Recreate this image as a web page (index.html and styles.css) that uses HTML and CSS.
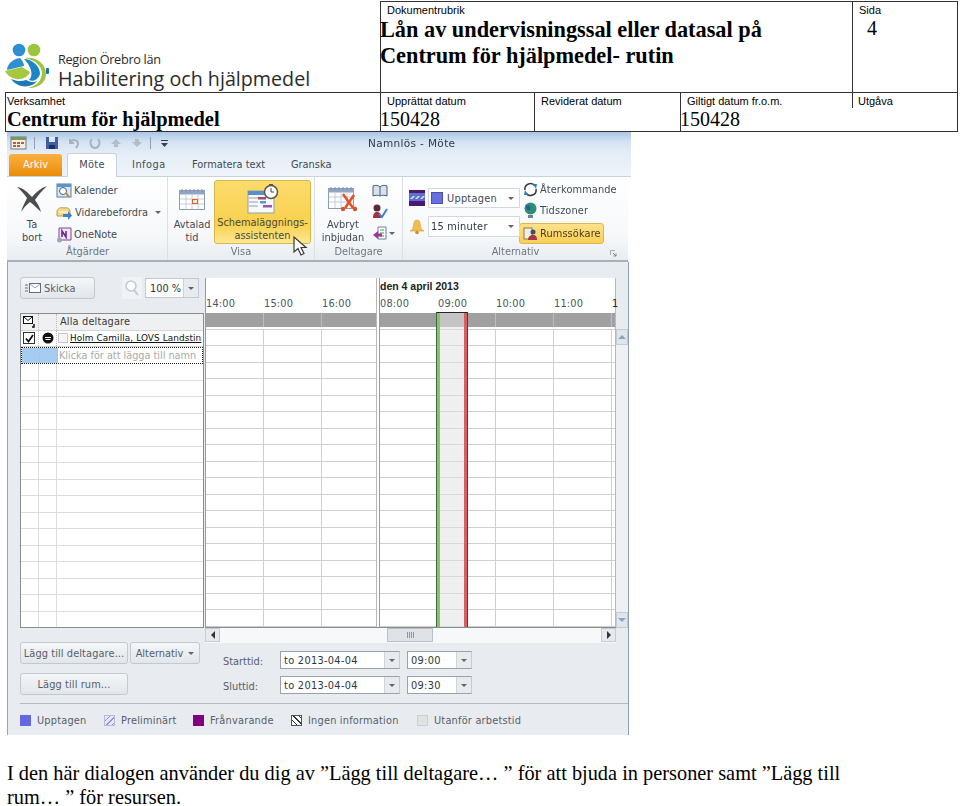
FILE: index.html
```html
<!DOCTYPE html>
<html lang="sv">
<head>
<meta charset="utf-8">
<title>Lån av undervisningssal eller datasal på Centrum för hjälpmedel</title>
<link rel="stylesheet" href="styles.css">
</head>
<body>
<div class="page">
  <header class="head">
    <div class="logo">
      <svg class="logo-mark" viewBox="0 0 45 48" width="45" height="48">
        <circle cx="15" cy="8" r="6.3" fill="#2e8fd0"/>
        <circle cx="30" cy="8" r="6.3" fill="#9cc43c"/>
        <path d="M21 16 C32 14 42 22 42 32 C42 41 33 47 24 46 C33 44 38 38 38 31 C38 24 31 18 21 16Z" fill="#9cc43c"/>
        <path d="M20 17 C28 17 36 24 36 32 C34 38 29 40 25 38 C30 33 27 24 20 17Z" fill="#1f86c6"/>
        <path d="M16 16 C8 17 3 23 3 28 L20 24 C20 22 19 19 16 16Z" fill="#2e8fd0"/>
        <path d="M1 29 L18 25 L26 30 C24 35 18 38 12 37 C7 36 3 33 1 29Z" fill="#a6c83f"/>
        <path d="M7 37 C12 39 17 40 22 38 C26 40 30 41 33 39 C28 46 14 47 7 37Z" fill="#1b79b8"/>
        <rect x="42" y="26" width="3" height="6" rx="1" fill="#1f6fae"/>
      </svg>
      <div class="logo-text">
        <div class="logo-org">Region Örebro län</div>
        <div class="logo-name">Habilitering och hjälpmedel</div>
      </div>
    </div>
    <div class="cell title-cell">
      <div class="label label-in">Dokumentrubrik</div>
      <div class="title">Lån av undervisningssal eller datasal på<br>Centrum för hjälpmedel- rutin</div>
    </div>
    <div class="cell page-cell">
      <div class="label label-side">Sida</div>
      <div class="page-no">4</div>
    </div>
    <div class="meta">
      <div class="mcell m-unit">
        <div class="label">Verksamhet</div>
        <div class="unit">Centrum för hjälpmedel</div>
      </div>
      <div class="mcell m-date1">
        <div class="label label-in">Upprättat datum</div>
        <div class="value">150428</div>
      </div>
      <div class="mcell m-date2">
        <div class="label label-in">Reviderat datum</div>
      </div>
      <div class="mcell m-date3">
        <div class="label label-in">Giltigt datum fr.o.m.</div>
        <div class="value">150428</div>
      </div>
      <div class="mcell m-ver">
        <div class="label label-side">Utgåva</div>
      </div>
    </div>
  </header>

  <section class="shot">
    <div class="titlebar">
      <div class="qat">
        <svg width="17" height="15" viewBox="0 0 17 15"><rect x="1" y="2" width="15" height="12" fill="#f3efe2" stroke="#6a7a8c"/><path d="M1 2h15v3H1z" fill="#7a9a5a"/><path d="M3 7h3v2H3zM7 7h3v2H7zM11 7h3v2h-3zM3 10h3v2H3zM7 10h3v2H7z" fill="#c05a3a"/></svg>
        <span class="qat-sep"></span>
        <svg width="14" height="14" viewBox="0 0 14 14"><path d="M1 1h12v12H1z" fill="#3d5fa8"/><path d="M4 1h6v5H4z" fill="#dfe8f5"/><path d="M4 9h6v4H4z" fill="#1e2f66"/></svg>
        <svg width="12" height="12" viewBox="0 0 12 12"><path d="M2 2 v4 h4 M2 6 C4 2 10 2 10 7 C10 9 9 10 8 11" fill="none" stroke="#a9b3bd" stroke-width="2"/></svg>
        <svg width="12" height="12" viewBox="0 0 12 12"><path d="M3 2 C0 5 2 11 6 11 C10 11 12 5 9 2" fill="none" stroke="#a9b3bd" stroke-width="2"/></svg>
        <svg width="12" height="10" viewBox="0 0 12 10"><path d="M6 1 L11 6 H8 V9 H4 V6 H1Z" fill="#b4bcc4"/></svg>
        <svg width="12" height="10" viewBox="0 0 12 10"><path d="M6 9 L11 4 H8 V1 H4 V4 H1Z" fill="#b4bcc4"/></svg>
        <span class="qat-sep"></span>
        <svg width="7" height="8" viewBox="0 0 7 8"><path d="M0 1h7v1H0zM0 4h7L3.500 8Z" fill="#30405a"/></svg>
      </div>
      <div class="win-title">Namnlös - Möte</div>
    </div>
    <nav class="tabs">
      <span class="tab-file">Arkiv</span>
      <span class="tab tab-active">Möte</span>
      <span class="tab tab-infoga">Infoga</span>
      <span class="tab tab-format">Formatera text</span>
      <span class="tab tab-gr">Granska</span>
    </nav>
    <div class="ribbon">
      <div class="group g-actions">
        <div class="group-body">
          <div class="big big-del">
            <svg width="32" height="28" viewBox="0 0 32 28"><path d="M1 2 C8 3 12 8 16 12 C20 7 25 3 31 1 C26 6 22 10 19 15 C22 19 24 23 25 27 C21 23 18 20 14 17 C10 20 7 24 5 27 C6 22 9 18 11 13 C8 9 5 5 1 2Z" fill="#4d4d4d"/></svg>
            <span>Ta<br>bort</span>
          </div>
          <div class="small-col">
            <div class="small"><svg width="16" height="16" viewBox="0 0 16 16"><rect x="1" y="1" width="14" height="13" fill="#dbe9f6" stroke="#4a7fb0"/><rect x="1" y="1" width="14" height="3" fill="#5d93c6"/><circle cx="7" cy="8" r="3.500" fill="#fff" stroke="#49617a"/><path d="M10 10l3 4" stroke="#c28a2a" stroke-width="2"/></svg><span>Kalender</span></div>
            <div class="small"><svg width="17" height="16" viewBox="0 0 17 16"><path d="M1 7 C1 3 5 2 8 3 C12 2 14 4 14 7 V11 H1Z" fill="#f2d88a" stroke="#c29a44"/><path d="M3 7h9" stroke="#fff"/><path d="M7 9 H12 V6 L16 10.500 L12 15 V12 H7Z" fill="#3f80c8"/></svg><span>Vidarebefordra</span><i class="caret caret-vb"></i></div>
            <div class="small"><svg width="16" height="16" viewBox="0 0 16 16"><path d="M3 1h12v12H3z" fill="#efe6f5" stroke="#8043a0"/><path d="M6 10V4l4 6V4" fill="none" stroke="#6a2a90" stroke-width="1.600"/><circle cx="3.500" cy="13" r="2.500" fill="#9aa7b5"/></svg><span>OneNote</span></div>
          </div>
        </div>
        <div class="group-label">Åtgärder</div>
      </div>
      <div class="group g-view">
        <div class="group-body">
          <div class="big big-cal">
            <svg width="26" height="22" viewBox="0 0 26 22"><rect x=".500" y="2.500" width="25" height="19" fill="#fff" stroke="#8f9eae"/><rect x=".500" y="2.500" width="25" height="4" fill="#8fa7c4"/><path d="M7 7v14M13 7v14M19 7v14M1 11h24M1 16h24" stroke="#c4ccd4"/><rect x="13.500" y="11.500" width="5" height="4" fill="#fbe6da" stroke="#d8632e"/><path d="M3 1v3M7 1v3M11 1v3M15 1v3M19 1v3M23 1v3" stroke="#7d8fa5"/></svg>
            <span>Avtalad<br>tid</span>
          </div>
          <div class="sched-btn">
            <svg width="32" height="30" viewBox="0 0 32 30"><rect x="1" y="7" width="26" height="22" fill="#f7f9fb" stroke="#8d9fb3"/><rect x="1" y="7" width="26" height="4" fill="#5c8fc8"/><path d="M2 14h9M2 18h9M2 22h9" stroke="#8ba0b5"/><rect x="11" y="13" width="8" height="2.500" fill="#a34a6e"/><rect x="13" y="17" width="6" height="2.500" fill="#5d93c6"/><rect x="16" y="21" width="9" height="2.500" fill="#8a5ca8"/><circle cx="24" cy="8" r="6.500" fill="#fff" stroke="#5a5a4a" stroke-width="1.500"/><path d="M24 4v4h3" stroke="#444" fill="none"/><path d="M22 0h4v1.500h-4z" fill="#555"/></svg>
            <span>Schemaläggnings-<br>assistenten</span>
          </div>
        </div>
        <div class="group-label">Visa</div>
      </div>
      <div class="group g-part">
        <div class="group-body">
          <div class="big big-cancel">
            <svg width="30" height="26" viewBox="0 0 30 26"><rect x=".500" y="2.500" width="25" height="20" fill="#fff" stroke="#8f9eae"/><rect x=".500" y="2.500" width="25" height="4" fill="#8fa7c4"/><path d="M7 7v15M13 7v15M19 7v15M1 11h24M1 16h24" stroke="#c4ccd4"/><path d="M3 1v3M7 1v3M11 1v3M15 1v3M19 1v3M23 1v3" stroke="#7d8fa5"/><path d="M15 8 L25 22 M26 9 L17 22" stroke="#e2502a" stroke-width="2.500"/><circle cx="15" cy="23" r="2.200" fill="#e2502a"/><circle cx="27" cy="23" r="2.200" fill="#e2502a"/></svg>
            <span>Avbryt<br>inbjudan</span>
          </div>
          <div class="icon-col">
            <svg width="16" height="13" viewBox="0 0 16 13"><path d="M1 2 C4 1 6 1 8 3 C10 1 12 1 15 2 V12 C12 11 10 11 8 12 C6 11 4 11 1 12Z" fill="#d9e2ec" stroke="#44607e"/><path d="M8 3v9" stroke="#44607e"/></svg>
            <svg width="16" height="15" viewBox="0 0 16 15"><circle cx="5" cy="4" r="3.500" fill="#5a2a3a"/><path d="M1 14 C1 9 3 8 5 8 C8 8 9 10 9 14Z" fill="#a5303a"/><path d="M7 10 L10 13 L15 5" fill="none" stroke="#3f7fd0" stroke-width="2"/></svg>
            <div class="icon-menu">
              <svg width="16" height="15" viewBox="0 0 16 15"><path d="M6 1h8v12H6z" fill="#fff" stroke="#6d7f92"/><path d="M8 4h4M8 7h4M8 10h4" stroke="#4d8f5a"/><path d="M1 9 L6 5 V7.500 H10 V10.500 H6 V13Z" fill="#a0369a"/></svg>
              <i class="caret"></i>
            </div>
          </div>
        </div>
        <div class="group-label">Deltagare</div>
      </div>
      <div class="group g-opts">
        <div class="group-body">
          <div class="opt-col">
            <div class="opt-row">
              <svg width="16" height="16" viewBox="0 0 16 16"><rect width="16" height="16" fill="#4a1a72"/><rect y="3" width="16" height="8" fill="#5f6fd0"/><path d="M1 9l3-3h2L3 9zM6 9l3-3h2L8 9zM11 9l3-3h2l-3 3z" fill="#e6e6f5"/></svg>
              <div class="combo"><i class="swatch"></i><span>Upptagen</span><i class="caret caret-r"></i></div>
            </div>
            <div class="opt-row">
              <svg width="16" height="16" viewBox="0 0 16 16"><path d="M8 1 C5 1 5 4 4.500 7 C4 10 3 11 1 12 H15 C13 11 12 10 11.500 7 C11 4 11 1 8 1Z" fill="#f2bd4a" stroke="#cf9a33" stroke-width=".6"/><circle cx="8" cy="13.500" r="1.800" fill="#d98a2a"/></svg>
              <div class="combo combo-min"><span>15 minuter</span><i class="caret caret-r"></i></div>
            </div>
          </div>
          <div class="opt-links">
            <div class="small"><svg width="15" height="15" viewBox="0 0 15 15"><path d="M2 8 A5.500 5.500 0 0 1 12 4" fill="none" stroke="#3a3a3a" stroke-width="1.500"/><path d="M13 7 A5.500 5.500 0 0 1 3 11" fill="none" stroke="#3a3a3a" stroke-width="1.500"/><path d="M10 2l4 0-1 5zM5 13l-4 0 1-5z" fill="#2f7fc0"/></svg><span>Återkommande</span></div>
            <div class="small"><svg width="15" height="17" viewBox="0 0 15 17"><circle cx="7.500" cy="6.500" r="6" fill="#2f8f74"/><path d="M3 4 C6 2 8 5 7 8 C5 9 3 7 3 4Z" fill="#1d5f9e"/><path d="M5 13h5v3H5z" fill="#6f8195"/></svg><span>Tidszoner</span></div>
            <div class="small small-on"><svg width="15" height="14" viewBox="0 0 15 14"><rect x="1" y="1" width="8" height="11" fill="#f4efdf" stroke="#8a7a55"/><circle cx="10" cy="5" r="2.500" fill="#3f4f68"/><path d="M5 13 C5 9 8 8 10 8 C13 8 14 10 14 13Z" fill="#a8344a"/></svg><span>Rumssökare</span></div>
          </div>
        </div>
        <div class="group-label">Alternativ<svg class="launcher" width="7" height="7" viewBox="0 0 7 7"><path d="M.500.500H5M.500.500V5" stroke="#a0a8b0" fill="none"/><path d="M3 3l3 3M6 3.500V6H3.500" stroke="#7a8490" fill="none"/></svg></div>
      </div>
      <svg class="cursor" width="15" height="20" viewBox="0 0 15 20"><path d="M1 1 V16 L5 12.500 L8 19 L11 17.500 L8 11.500 H13Z" fill="#fff" stroke="#3a3a3a" stroke-width="1.200"/></svg>
    </div>

    <div class="body">
      <div class="sched">
        <div class="left">
          <div class="tools">
            <div class="btn btn-send"><svg width="16" height="10" viewBox="0 0 16 10"><path d="M0 2h3M0 5h3M0 8h3" stroke="#57708a"/><rect x="4.500" y=".500" width="11" height="9" fill="#fff" stroke="#57708a"/><path d="M5 1l5 4 5-4" fill="none" stroke="#8fa3b7"/></svg><span>Skicka</span></div>
            <div class="zoom-ic"><svg width="14" height="16" viewBox="0 0 14 16"><circle cx="6" cy="6" r="5" fill="#fbfcfd" stroke="#c2c8ce" stroke-width="1.500"/><path d="M9 10l4 5" stroke="#c2c8ce" stroke-width="2"/></svg></div>
            <div class="zoom-box"><span>100 %</span><i class="drop"><i class="caret"></i></i></div>
          </div>
          <div class="list">
            <div class="list-head">
              <div class="c c1"><svg width="12" height="12" viewBox="0 0 12 12"><rect x=".500" y=".500" width="9" height="7" fill="#fff" stroke="#111"/><path d="M1 1l4 3.500L9 1" fill="none" stroke="#111"/><path d="M11 8v3H9" fill="none" stroke="#111" stroke-width="1.500"/></svg></div>
              <div class="c c2"></div>
              <div class="c c3">Alla deltagare</div>
            </div>
            <div class="row">
              <div class="c c1"><span class="check"><svg width="9" height="9" viewBox="0 0 9 9"><path d="M1 4.500l2.500 3L8 1" fill="none" stroke="#111" stroke-width="1.800"/></svg></span></div>
              <div class="c c2"><svg width="12" height="12" viewBox="0 0 12 12"><circle cx="6" cy="6" r="5.500" fill="#111"/><path d="M3 5.500h6M3.500 7.500h5" stroke="#fff" stroke-width="1.100"/></svg></div>
              <div class="c c3 person"><i class="mini-box"></i><span>Holm Camilla, LOVS Landstin</span></div>
            </div>
            <div class="row row-new">
              <div class="c c1 blue"></div>
              <div class="c c2 blue"></div>
              <div class="c c3 hint">Klicka för att lägga till namn</div>
            </div>
            <div class="rest"></div>
          </div>
        </div>
        <div class="right">
          <div class="timeline">
            <div class="day day-a">
              <div class="day-date"></div>
              <div class="hours"><span>14:00</span><span>15:00</span><span>16:00</span></div>
              <div class="busy"></div>
              <div class="cells"></div>
            </div>
            <div class="day day-b">
              <div class="day-date">den 4 april 2013</div>
              <div class="hours"><span>08:00</span><span>09:00</span><span>10:00</span><span>11:00</span><span class="cut">1</span></div>
              <div class="busy"></div>
              <div class="cells"></div>
              <div class="meeting"></div>
            </div>
          </div>
          <div class="hscroll">
            <div class="sb-btn"><i class="tri tri-l"></i></div>
            <div class="thumb"><i></i><i></i><i></i><i></i></div>
            <div class="sb-btn"><i class="tri tri-r"></i></div>
          </div>
        </div>
        <div class="vscroll">
          <div class="vbtn"><i class="tri tri-u"></i></div>
          <div class="vbtn"><i class="tri tri-d"></i></div>
        </div>
      </div>

      <div class="form">
        <div class="form-btns">
          <div class="btn-row">
            <div class="btn btn-add">Lägg till deltagare...</div>
            <div class="btn btn-alt">Alternativ<i class="caret"></i></div>
          </div>
          <div class="btn btn-add">Lägg till rum...</div>
        </div>
        <div class="fields">
          <div class="field-row">
            <span class="field-label">Starttid:</span>
            <div class="input input-date"><span>to 2013-04-04</span><i class="drop"><i class="caret"></i></i></div>
            <div class="input input-time"><span>09:00</span><i class="drop"><i class="caret"></i></i></div>
          </div>
          <div class="field-row">
            <span class="field-label">Sluttid:</span>
            <div class="input input-date"><span>to 2013-04-04</span><i class="drop"><i class="caret"></i></i></div>
            <div class="input input-time"><span>09:30</span><i class="drop"><i class="caret"></i></i></div>
          </div>
        </div>
      </div>

      <div class="legend">
        <div class="leg"><i class="key key-busy"></i>Upptagen</div>
        <div class="leg"><i class="key key-tent"></i>Preliminärt</div>
        <div class="leg"><i class="key key-oof"></i>Frånvarande</div>
        <div class="leg"><i class="key key-none"></i>Ingen information</div>
        <div class="leg leg-out"><i class="key key-off"></i>Utanför arbetstid</div>
      </div>
    </div>
  </section>

  <p class="caption">I den här dialogen använder du dig av ”Lägg till deltagare… ” för att bjuda in personer samt ”Lägg till rum… ” för resursen.</p>
</div>
</body>
</html>
```

FILE: styles.css
```css
* { box-sizing: border-box; }
html, body { margin: 0; padding: 0; background: #fff; }
i { display: block; font-style: normal; }
svg { display: block; flex: none; }

.page { width: 960px; height: 806px; overflow: hidden; position: relative; color: #000; }

/* Document header */
.head {
  display: grid;
  grid-template-columns: 380px 472px 106px;
  grid-template-rows: 91px 40px;
  width: 958px;
  margin-top: 1px;
  font-family: "Liberation Serif", serif;
}
.logo { display: flex; align-items: flex-end; padding: 0 0 2px 4px; min-width: 0; }
.logo-text { font-family: "Open Sans", sans-serif; color: #2b2b2b; margin-left: 9px; margin-bottom: -1px; }
.logo-org { font-size: 12.700px; line-height: 16px; letter-spacing: -.3px; }
.logo-name { font-size: 19.700px; line-height: 24px; }
.cell { border-top: 1px solid #333; border-left: 1px solid #333; }
.page-cell { border-right: 1px solid #333; }
.label { font-family: "Liberation Sans", sans-serif; font-size: 11px; line-height: 14px; padding-top: 1px; }
.label-in { padding-left: 6px; }
.label-side { padding-left: 6px; }
.title { font-weight: bold; font-size: 22.300px; line-height: 26px; margin-left: -1px; white-space: nowrap; }
.page-no { font-size: 20px; line-height: 22px; padding-left: 14px; }
.meta {
  grid-column: 1 / 4;
  display: grid;
  grid-template-columns: 374px 154px 146px 172px 106px;
  margin-left: 5px;
  border: 1px solid #333;
  height: 40px;
}
.mcell { border-left: 1px solid #333; }
.m-unit { border-left: 0; padding-left: 1px; }
.m-ver { border-left: 0; position: relative; }
.m-ver::before { content: ""; position: absolute; left: 0; top: 0; height: 15px; border-left: 1px solid #333; }
.unit { font-weight: bold; font-size: 20.400px; line-height: 22px; }
.value { font-size: 20px; line-height: 22px; margin-left: -1px; }

/* Outlook screenshot */
.shot {
  width: 624px;
  height: 603px;
  margin-left: 7px;
  display: flex;
  flex-direction: column;
  font-family: "DejaVu Sans", sans-serif;
  font-size: 9.800px;
  color: #3f4a55;
  filter: blur(.35px);
  background: linear-gradient(to right, #8ea7c0 0, #8ea7c0 2px, transparent 2px);
}
.titlebar {
  height: 21px;
  display: flex;
  align-items: center;
  position: relative;
  background: linear-gradient(to bottom, #a9c6e6 0, #d3e2f2 45%, #e4edf6 100%);
}
.qat { display: flex; align-items: center; padding-left: 3px; }
.qat > svg { margin-right: 9px; }
.qat-sep { width: 1px; height: 12px; background: #8ea0b5; margin-right: 10px; margin-left: -2px; }
.win-title { margin-left: 191px; color: #2d3a48; font-size: 10.500px; letter-spacing: .35px; }
.tabs {
  height: 24px;
  display: flex;
  align-items: flex-end;
  padding-left: 2px;
  background: linear-gradient(to bottom, #e4edf6, #f0f4f9);
  border-bottom: 1px solid #c9d1da;
}
.tab-file {
  width: 53px;
  height: 22px;
  border-radius: 3px 3px 0 0;
  background: linear-gradient(to bottom, #fbb040, #e98c0a);
  color: #fff;
  text-align: center;
  line-height: 21px;
}
.tab { height: 22px; line-height: 21px; }
.tab-active {
  width: 50px;
  margin-left: 5px;
  margin-bottom: -1px;
  height: 24px;
  text-align: center;
  background: #fff;
  border: 1px solid #c9d1da;
  border-bottom: 0;
  border-radius: 3px 3px 0 0;
  letter-spacing: .3px;
}
.tab-infoga { margin-left: 15px; width: 60px; letter-spacing: .5px; }
.tab-format { width: 99px; }
.tab-gr { width: 60px; }
.ribbon {
  height: 85px;
  display: flex;
  position: relative;
  background: linear-gradient(to bottom, #fff 0, #f6f8fa 70%, #e9edf1 100%);
  border-bottom: 2px solid #a7b0ba;
  margin-right: 3px;
}
.group { display: flex; flex-direction: column; border-right: 1px solid #dbe0e6; }
.group-body { flex: 1; display: flex; }
.group-label { height: 18px; text-align: center; color: #6b7680; line-height: 16px; position: relative; }
.g-actions { width: 160px; margin-left: 1px; }
.g-view { width: 147px; }
.g-part { width: 88px; }
.g-opts { flex: 1; border-right: 0; }
.big { display: flex; flex-direction: column; align-items: center; text-align: center; line-height: 12.500px; }
.big-del { width: 48px; padding-top: 8px; }
.big-del span { margin-top: 6px; }
.small-col { display: flex; flex-direction: column; gap: 5px; padding-top: 5px; }
.small { display: flex; align-items: center; height: 17px; gap: 2px; white-space: nowrap; }
.caret { width: 0; height: 0; border: 3px solid transparent; border-top: 3px solid #5c6670; border-bottom: 0; }
.caret-vb { margin-left: 5px; }
.big-cal { width: 46px; padding-top: 11px; margin-left: 1px; margin-right: -1px; }
.big-cal span { margin-top: 9px; }
.sched-btn {
  width: 97px;
  height: 64px;
  margin-top: 3px;
  display: flex;
  flex-direction: column;
  align-items: center;
  text-align: center;
  line-height: 12.500px;
  padding-top: 3px;
  border: 1px solid #d9b84a;
  border-radius: 3px;
  background: linear-gradient(to bottom, #fbdb6c 0, #f9d14e 70%, #fde794 100%);
  color: #4a4a3a;
}
.sched-btn span { margin-top: 3px; font-size: 9.800px; white-space: nowrap; }
.big-cancel { width: 56px; padding-top: 9px; }
.big-cancel span { margin-top: 7px; }
.icon-col { display: flex; flex-direction: column; gap: 7px; padding: 7px 0 0 1px; }
.icon-menu { display: flex; align-items: center; gap: 1px; }
.opt-col { display: flex; flex-direction: column; gap: 8px; padding: 11px 0 0 6px; }
.opt-row { display: flex; align-items: center; gap: 3px; }
.combo {
  width: 92px;
  height: 20px;
  border: 1px solid #d3d8dd;
  background: #fff;
  display: flex;
  align-items: center;
  padding: 0 2px;
  gap: 4px;
  position: relative;
  letter-spacing: .25px;
}
.combo-min { height: 21px; color: #2c3640; }
.swatch { width: 12px; height: 12px; background: #6a6fe0; border: 1px solid #4a4fb0; }
.caret-r { position: absolute; right: 5px; top: 8px; }
.opt-links { display: flex; flex-direction: column; gap: 4px; padding-top: 4px; margin-left: 3px; }
.opt-links .small { gap: 3px; letter-spacing: .1px; }
.opt-links svg { margin-right: -1px; }
.small-on {
  height: 21px;
  width: 85px;
  margin-left: -4px;
  padding-left: 3px;
  background: linear-gradient(to bottom, #fde28a, #f9cf55);
  border: 1px solid #dcb84e;
  border-radius: 3px;
  color: #4a3a20;
}
.launcher { position: absolute; right: 11px; top: 6px; }
.cursor { position: absolute; left: 286px; top: 59px; }

/* Scheduling area */
.body {
  flex: 1;
  width: 621px;
  margin-left: 1px;
  background: #e8ebf0;
  border-right: 1px solid #8f9eae;
  display: flex;
  flex-direction: column;
  padding-left: 12px;
}
.sched { display: flex; padding-top: 15px; height: 381px; }
.left { width: 185px; display: flex; flex-direction: column; }
.tools { height: 36px; display: flex; align-items: flex-start; }
.btn {
  border: 1px solid #c2c9d0;
  border-radius: 3px;
  background: linear-gradient(to bottom, #f4f6f8, #e2e6ea);
  display: flex;
  align-items: center;
  justify-content: center;
  color: #55606a;
}
.btn-send { width: 75px; height: 22px; gap: 3px; justify-content: flex-start; padding-left: 4px; }
.zoom-ic { width: 20px; height: 22px; margin-left: 27px; display: flex; align-items: center; justify-content: center; background: #f0f2f5; }
.zoom-box {
  width: 54px;
  height: 20px;
  margin-left: 3px;
  margin-top: 1px;
  border: 1px solid #c2c9d0;
  background: #fff;
  display: flex;
  align-items: center;
  padding-left: 4px;
  color: #2c3640;
}
.drop {
  margin-left: auto;
  align-self: stretch;
  width: 15px;
  background: #e8ebee;
  border-left: 1px solid #cfd4da;
  display: flex;
  align-items: center;
  justify-content: center;
}
.list { height: 315px; width: 184px; border: 1px solid #8d8d8d; background: #fff; display: flex; flex-direction: column; }
.list-head, .row { display: flex; height: 16.500px; flex: none; border-bottom: 1px solid #d6d6d6; }
.list-head { background: #eef0f2; color: #3a3a3a; }
.c { display: flex; align-items: center; }
.c1 { width: 18px; padding-left: 2px; border-right: 1px dotted #bbb; }
.c2 { width: 18px; justify-content: center; border-right: 1px dotted #bbb; }
.c3 { flex: 1; min-width: 0; padding-left: 3px; white-space: nowrap; letter-spacing: .15px; }
.check { width: 12px; height: 12px; border: 1px solid #333; background: #fff; display: flex; align-items: center; justify-content: center; }
.person { color: #111; padding-left: 1px; font-size: 8.900px; letter-spacing: .1px; }
.person span { text-decoration: underline; }
.mini-box { width: 10px; height: 10px; border: 1px solid #c8c8c8; background: #f4f4f4; margin-right: 2px; flex: none; }
.row-new { border: 1px dotted #222; }
.blue { background: #a7ccf2; }
.hint { color: #a9a9a9; padding-left: 1px; font-size: 9.700px; letter-spacing: 0; }
.rest {
  flex: 1;
  background:
    repeating-linear-gradient(to bottom, transparent 0, transparent 16px, #dcdcdc 16px, #dcdcdc 17px, transparent 17px, transparent 32px, #dcdcdc 32px, #dcdcdc 33px),
    linear-gradient(to right, transparent 17px, #ddd 17px, #ddd 18px, transparent 18px, transparent 35px, #ddd 35px, #ddd 36px, transparent 36px);
}
.right { width: 411px; margin-left: 1px; display: flex; flex-direction: column; }
.timeline { height: 351px; display: flex; gap: 2px; background: #fff; border-bottom: 1px solid #8d8d8d; margin-top: 1px; }
.day { position: relative; display: flex; flex-direction: column; border-left: 1px solid #9a9a9a; border-right: 1px solid #b8b8b8; }
.day-a { width: 172px; }
.day-b { width: 237px; }
.day-date { height: 16px; font-family: "Liberation Sans", sans-serif; font-weight: bold; color: #222; font-size: 10.500px; line-height: 16px; white-space: nowrap; }
.hours { display: flex; height: 19px; color: #4a5560; line-height: 19px; letter-spacing: .2px; margin-left: -1px; }
.hours span { width: 58px; padding-left: 1px; flex: none; }
.hours .cut { width: 8px; color: #222; }
.busy {
  height: 14px;
  background: repeating-linear-gradient(to right, #a0a0a0 0, #a0a0a0 57px, #bdbdbd 57px, #bdbdbd 58px);
  margin-bottom: 2px;
}
.cells {
  flex: 1;
  background:
    repeating-linear-gradient(to bottom, #cfcfcf 0, #cfcfcf 1px, transparent 1px, transparent 16px, #cfcfcf 16px, #cfcfcf 17px, transparent 17px, transparent 33px),
    repeating-linear-gradient(to right, transparent 0, transparent 57px, #cfcfcf 57px, #cfcfcf 58px);
}
.meeting {
  position: absolute;
  left: 56px;
  top: 34px;
  bottom: 0;
  width: 32px;
  background: rgba(225, 225, 225, .55);
  border-top: 1px solid #222;
  border-left: 1px solid #3b6a3b;
  border-right: 1px solid #7a2a2a;
}
.meeting::before { content: ""; position: absolute; left: 0; top: 0; bottom: 0; width: 3px; background: #8cc06c; }
.meeting::after { content: ""; position: absolute; right: 0; top: 0; bottom: 0; width: 3px; background: #d96060; }
.hscroll { height: 15px; display: flex; background: #f7f8fa; }
.sb-btn { width: 15px; height: 14px; border: 1px solid #c6ccd3; background: #e6e9ed; display: flex; align-items: center; justify-content: center; flex: none; }
.tri { width: 0; height: 0; border: 4px solid transparent; }
.tri-l { border-right-color: #333; border-left: 0; }
.tri-r { border-left-color: #333; border-right: 0; }
.tri-u { border-bottom-color: #8fa3ba; border-top: 0; }
.tri-d { border-top-color: #8fa3ba; border-bottom: 0; }
.thumb { width: 46px; height: 14px; margin-left: 167px; margin-right: 168px; border: 1px solid #b9c0c8; background: #dfe3e8; display: flex; align-items: center; justify-content: center; gap: 1px; flex: none; }
.thumb i { width: 1px; height: 6px; background: #8e979f; }
.vscroll { width: 13px; height: 299px; margin-top: 52px; background: #eef0f3; display: flex; flex-direction: column; justify-content: space-between; }
.vbtn { height: 16px; background: #dfe5ec; border: 1px solid #c6ccd3; display: flex; align-items: center; justify-content: center; }

.form { display: flex; height: 53px; margin-top: -1px; }
.form-btns { width: 180px; display: flex; flex-direction: column; gap: 9px; }
.btn-row { display: flex; gap: 2px; }
.btn-add { width: 108px; height: 22px; letter-spacing: .1px; }
.btn-alt { width: 70px; height: 22px; gap: 5px; }
.fields { margin-left: 23px; padding-top: 9px; display: flex; flex-direction: column; gap: 7px; }
.field-row { display: flex; align-items: center; height: 18px; }
.field-label { width: 57px; color: #55606a; padding-top: 3px; }
.input { height: 18px; border: 1px solid #9aa2aa; background: #fff; display: flex; align-items: center; padding-left: 3px; color: #2c3640; border-right-color: #c6ccd3; letter-spacing: .3px; }
.input-date { width: 120px; }
.input-time { width: 65px; margin-left: 7px; }

.legend {
  margin-top: 8px;
  flex: 1;
  padding-top: 1px;
  border-top: 1px solid #b4bbc3;
  display: flex;
  align-items: center;
  color: #55606a;
  letter-spacing: .2px;
}
.leg { display: flex; align-items: center; gap: 6px; white-space: nowrap; }
.leg:nth-child(1) { width: 84px; }
.leg:nth-child(2) { width: 89px; }
.leg:nth-child(3) { width: 98px; }
.leg:nth-child(4) { width: 126px; }
.key { width: 11px; height: 11px; flex: none; }
.key-busy { background: #6666e0; }
.key-tent { background: repeating-linear-gradient(135deg, #e8e8f8 0, #e8e8f8 3px, #8f8fe0 3px, #8f8fe0 4px); border: 1px solid #b8b8e0; }
.key-oof { background: #800080; }
.key-none { background: repeating-linear-gradient(45deg, #fff 0, #fff 3px, #333 3px, #333 4px); border: 1px solid #555; }
.key-off { background: #e2e2e2; border: 1px solid #cfcfcf; }

.caption {
  margin: 26px 0 0;
  padding: 0 80px 0 7px;
  font-family: "Liberation Serif", serif;
  font-size: 20.350px;
  line-height: 24px;
}
```
